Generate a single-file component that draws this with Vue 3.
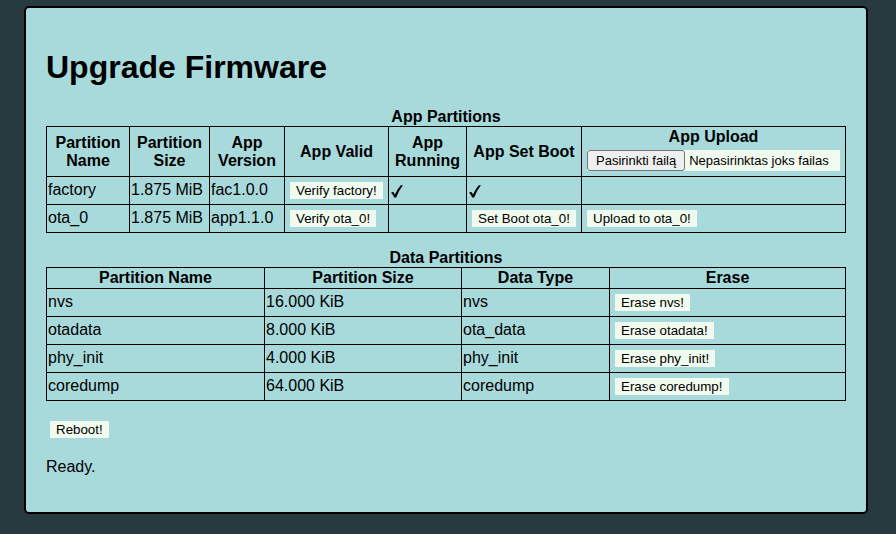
<script setup>
import { ref } from 'vue'

const apps = [
  { name: 'factory', size: '1.875 MiB', version: 'fac1.0.0', running: true, boot: true, upload: false },
  { name: 'ota_0', size: '1.875 MiB', version: 'app1.1.0', running: false, boot: false, upload: true },
]
const partitions = [
  { name: 'nvs', size: '16.000 KiB', type: 'nvs' },
  { name: 'otadata', size: '8.000 KiB', type: 'ota_data' },
  { name: 'phy_init', size: '4.000 KiB', type: 'phy_init' },
  { name: 'coredump', size: '64.000 KiB', type: 'coredump' },
]
const fileName = ref('Nepasirinktas joks failas')
function pick(event) {
  const file = event.target.files[0]
  fileName.value = file ? file.name : 'Nepasirinktas joks failas'
}
</script>

<template>
  <main class="panel">
    <h1>Upgrade Firmware</h1>

    <table>
      <caption>App Partitions</caption>
      <colgroup>
        <col class="app-name"><col class="app-size"><col class="app-version"><col class="app-valid">
        <col class="app-running"><col class="app-boot"><col>
      </colgroup>
      <thead>
        <tr>
          <th>Partition Name</th>
          <th>Partition Size</th>
          <th>App Version</th>
          <th>App Valid</th>
          <th>App Running</th>
          <th>App Set Boot</th>
          <th>
            App Upload
            <label class="file">
              <input type="file" @change="pick">
              <span class="choose">Pasirinkti failą</span>
              <span>{{ fileName }}</span>
            </label>
          </th>
        </tr>
      </thead>
      <tbody>
        <tr v-for="app in apps" :key="app.name">
          <td>{{ app.name }}</td>
          <td>{{ app.size }}</td>
          <td>{{ app.version }}</td>
          <td><button type="button">Verify {{ app.name }}!</button></td>
          <td>
            <svg v-if="app.running" class="tick" viewBox="0 0 12 13" role="img" aria-label="Yes">
              <path d="M0 7.8 L2.2 6.8 Q3.2 7.8 3.9 9.4 Q6.6 3.6 9.8 .2 H11.9 Q7.8 5.4 5.2 12.4 H3.2 Q1.8 9 0 7.8Z" />
            </svg>
          </td>
          <td>
            <svg v-if="app.boot" class="tick" viewBox="0 0 12 13" role="img" aria-label="Yes">
              <path d="M0 7.8 L2.2 6.8 Q3.2 7.8 3.9 9.4 Q6.6 3.6 9.8 .2 H11.9 Q7.8 5.4 5.2 12.4 H3.2 Q1.8 9 0 7.8Z" />
            </svg>
            <button v-else type="button">Set Boot {{ app.name }}!</button>
          </td>
          <td><button v-if="app.upload" type="button">Upload to {{ app.name }}!</button></td>
        </tr>
      </tbody>
    </table>

    <table>
      <caption>Data Partitions</caption>
      <colgroup>
        <col class="data-name"><col class="data-size"><col class="data-type"><col>
      </colgroup>
      <thead>
        <tr>
          <th>Partition Name</th>
          <th>Partition Size</th>
          <th>Data Type</th>
          <th>Erase</th>
        </tr>
      </thead>
      <tbody>
        <tr v-for="part in partitions" :key="part.name">
          <td>{{ part.name }}</td>
          <td>{{ part.size }}</td>
          <td>{{ part.type }}</td>
          <td><button type="button">Erase {{ part.name }}!</button></td>
        </tr>
      </tbody>
    </table>

    <button type="button">Reboot!</button>
    <p>Ready.</p>
  </main>
</template>

<style>
body {
  background: #263a40;
}
</style>

<style scoped>
.panel {
  margin: 6px 28px 20px 24px;
  padding: 20px 20px 36px;
  border: 2px solid #000;
  border-radius: 5px;
  background: #a8dadc;
  color: #000;
  font-family: "Liberation Sans", Arial, sans-serif;
  font-size: 16px;
  line-height: 18px;
}
h1 {
  margin: 21px 0 22px;
  font-size: 32px;
  line-height: 37px;
}
table {
  width: 100%;
  margin-bottom: 16px;
  border-collapse: collapse;
  table-layout: fixed;
}
caption {
  font-weight: bold;
}
th,
td {
  padding: 1px;
  border: 1px solid #000;
}
td {
  height: 25px;
  line-height: 24px;
  vertical-align: top;
}
.app-name { width: 83px; }
.app-size { width: 80px; }
.app-version { width: 75px; }
.app-valid { width: 104px; }
.app-running { width: 78px; }
.app-boot { width: 115px; }
.data-name { width: 218px; }
.data-size { width: 197px; }
.data-type { width: 148px; }
button {
  margin: 4px;
  padding: 1px 6px;
  border: 0;
  background: #f1faee;
  color: #000;
  font-family: inherit;
  line-height: 15px;
}
td button {
  display: block;
}
.tick {
  display: block;
  width: 12px;
  height: 13px;
  margin: 7px 1px 0;
}
.file {
  position: relative;
  display: flex;
  align-items: center;
  gap: 4px;
  margin: 4px;
  background: #f1faee;
  font-size: 13px;
  font-weight: normal;
  white-space: nowrap;
}
.file input {
  position: absolute;
  inset: 0;
  width: 100%;
  opacity: 0;
}
.choose {
  padding: 2px 8px;
  border: 1px solid #767676;
  border-radius: 3px;
  background: #efefef;
  line-height: 15px;
}
p {
  margin: 16px 0 0;
}
</style>
